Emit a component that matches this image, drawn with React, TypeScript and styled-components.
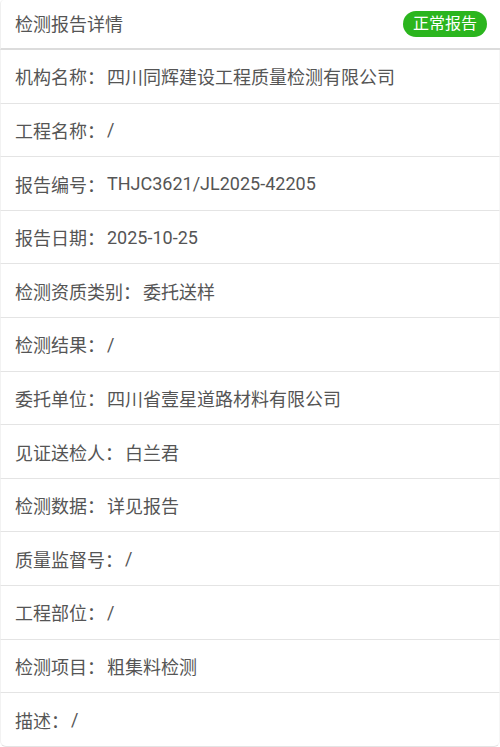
import styled, { createGlobalStyle } from "styled-components";

const GlobalStyle = createGlobalStyle`
  html, body {
    margin: 0;
    padding: 0;
    background: #ffffff;
  }
  * {
    box-sizing: border-box;
  }
`;

const Page = styled.div`
  height: 747px;
  display: flex;
  flex-direction: column;
  font-family: Roboto, "Noto Sans CJK SC", sans-serif;
  color: #555;
  background: #fff;
`;

const Header = styled.header`
  height: 50px;
  flex: none;
  display: flex;
  align-items: center;
  justify-content: space-between;
  padding: 0 13px 2px 14px;
  border-bottom: 2px solid #dcdcdc;
  border-left: 1px solid #f0f0f0;
  border-radius: 4px 4px 0 0;
`;

const Title = styled.h1`
  margin: 0;
  font-size: 18px;
  font-weight: 400;
  color: #555;
`;

const Badge = styled.span<{ $tone: string }>`
  height: 26px;
  padding: 0 10px;
  border-radius: 13px;
  background: ${(p) => p.$tone};
  color: #fff;
  font-size: 16px;
  line-height: 26px;
  margin-top: 2px;
`;

const Row = styled.div<{ $last?: boolean }>`
  flex: 1;
  display: flex;
  align-items: center;
  padding: 0 14px;
  font-size: 18px;
  color: #555;
  border-bottom: 1px solid #e4e4e4;
  border-left: 1px solid #f2f2f2;
  border-right: 1px solid #f6f6f6;
  border-radius: ${(p) => (p.$last ? "0 0 6px 6px" : "0")};
`;

const Value = styled.span`
  margin-left: 2px;
`;

const fields: [string, string][] = [
  ["机构名称", "四川同辉建设工程质量检测有限公司"],
  ["工程名称", "/"],
  ["报告编号", "THJC3621/JL2025-42205"],
  ["报告日期", "2025-10-25"],
  ["检测资质类别", "委托送样"],
  ["检测结果", "/"],
  ["委托单位", "四川省壹星道路材料有限公司"],
  ["见证送检人", "白兰君"],
  ["检测数据", "详见报告"],
  ["质量监督号", "/"],
  ["工程部位", "/"],
  ["检测项目", "粗集料检测"],
  ["描述", "/"],
];

export default function App() {
  return (
    <>
      <GlobalStyle />
      <Page>
        <Header>
          <Title>检测报告详情</Title>
          <Badge $tone="#2bb51e">正常报告</Badge>
        </Header>
        {fields.map(([label, value], i) => (
          <Row key={label} $last={i === fields.length - 1}>
            {label}：<Value>{value}</Value>
          </Row>
        ))}
      </Page>
    </>
  );
}
